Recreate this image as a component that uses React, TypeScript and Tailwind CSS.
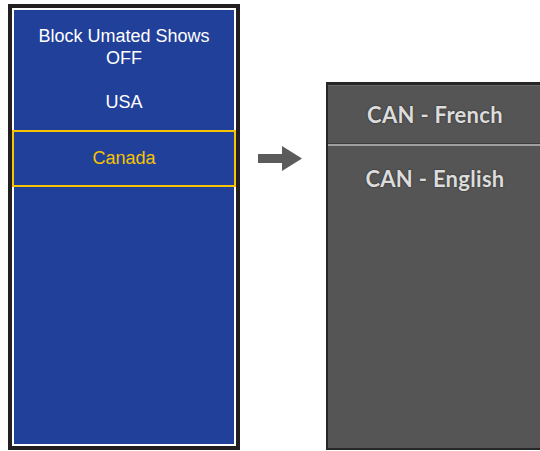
import { ReactNode } from "react";

const menuFont = { fontFamily: '"Liberation Sans", Arial, sans-serif' };
const screenFont = { fontFamily: 'Lato, "Open Sans", sans-serif' };

function MenuItem({ children, active }: { children: ReactNode; active?: boolean }) {
    if (active) {
        return (
            <div className="-mx-[2px] mt-[17px] border-2 border-[#f6c400] pt-[15px] pb-[16px] text-center text-[18px] leading-[22px] text-[#f6c400]">
                {children}
            </div>
        );
    }
    return <div className="text-center text-[18px] leading-[22px] text-white">{children}</div>;
}

function ScreenRow({ label, top }: { label: string; top: "first" | "next" }) {
    return (
        <div
            className={
                top === "first"
                    ? "h-[57px] pt-[16px] text-center text-[22px] leading-[26px] tracking-[0.3px] font-bold text-[#dcdcdc] [text-shadow:0_0_2px_rgba(0,0,0,0.6)]"
                    : "h-[58px] pt-[20px] text-center text-[22px] leading-[26px] tracking-[0.3px] font-bold text-[#dcdcdc] [text-shadow:0_0_2px_rgba(0,0,0,0.6)]"
            }
        >
            {label}
        </div>
    );
}

export default function App() {
    return (
        <div className="flex items-start w-[540px] h-[451px] overflow-hidden bg-white">
            {/* remote menu */}
            <div className="ml-2 mt-1 w-[232px] h-[446px] shrink-0 border-4 border-[#231f20]">
                <div className="h-full border-2 border-white bg-[#21409a]" style={menuFont}>
                    <div className="pt-[15px]">
                        <MenuItem>
                            Block Umated Shows
                            <br />
                            OFF
                        </MenuItem>
                        <div className="mt-[22px]">
                            <MenuItem>USA</MenuItem>
                        </div>
                        <MenuItem active>Canada</MenuItem>
                    </div>
                </div>
            </div>

            {/* arrow */}
            <svg className="ml-[18px] mt-[146px] shrink-0" width="44" height="26" viewBox="0 0 44 26">
                <path d="M0 8 H24 V0 L44 12.5 L24 25 V17 H0 Z" fill="#5b5b5b" />
            </svg>

            {/* tv screen */}
            <div className="ml-[24px] mt-[82px] w-[218px] h-[368px] shrink-0 border-l-2 border-r-2 border-t-[3px] border-b-2 border-[#262626] bg-[#555555]" style={screenFont}>
                <div className="h-px bg-[#676767]" />
                <ScreenRow label="CAN - French" top="first" />
                <div className="h-px bg-[#3c3c3c]" />
                <div className="h-[2px] bg-[#a0a0a0]" />
                <ScreenRow label="CAN - English" top="next" />
            </div>
        </div>
    );
}
